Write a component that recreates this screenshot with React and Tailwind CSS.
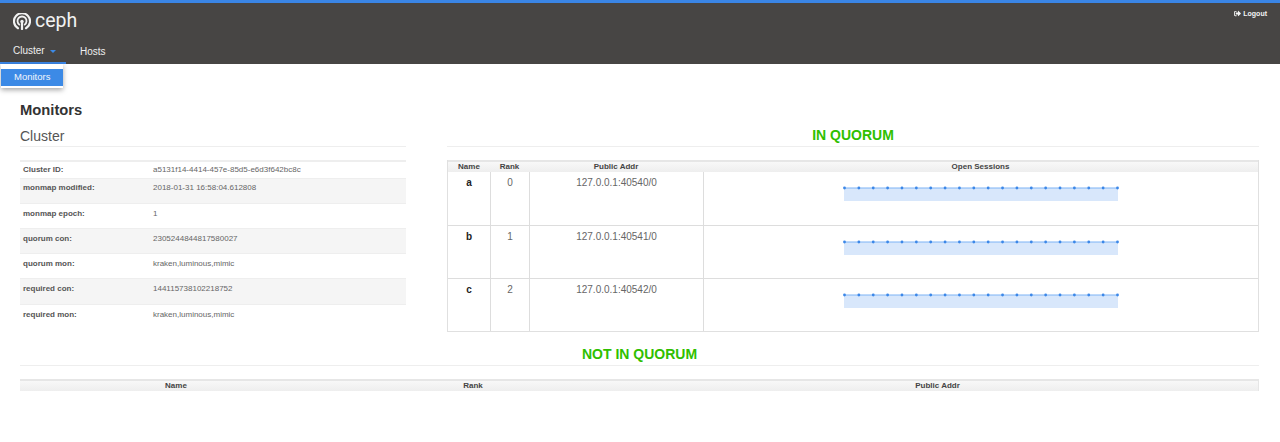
import { FaSignOutAlt } from 'react-icons/fa';

const clusterRows = [
    ['Cluster ID:', 'a5131f14-4414-457e-85d5-e6d3f642bc8c', 'h-[17px] pt-[3px]', ''],
    ['monmap modified:', '2018-01-31 16:58:04.612808', 'h-[25px] pt-[4px]', 'bg-[#f5f5f5]'],
    ['monmap epoch:', '1', 'h-[25px] pt-[5px]', ''],
    ['quorum con:', '2305244844817580027', 'h-[25px] pt-[5px]', 'bg-[#f5f5f5]'],
    ['quorum mon:', 'kraken,luminous,mimic', 'h-[25px] pt-[5px]', ''],
    ['required con:', '144115738102218752', 'h-[26px] pt-[5px]', 'bg-[#f5f5f5]'],
    ['required mon:', 'kraken,luminous,mimic', 'h-[25px] pt-[5px]', ''],
];

const monitors = [
    ['a', '0', '127.0.0.1:40540/0'],
    ['b', '1', '127.0.0.1:40541/0'],
    ['c', '2', '127.0.0.1:40542/0'],
];

// 20 samples of a flat sparkline
const Sparkline = () => (
    <svg width="276" height="16" viewBox="0 0 276 16" className="block">
        <rect x="1" y="3" width="274" height="13" fill="#d8e7fb" />
        <line x1="1" y1="3" x2="275" y2="3" stroke="#7db3f5" strokeWidth="1" />
        {Array.from({ length: 20 }, (_, i) => (
            <circle key={i} cx={1.5 + i * (273 / 19)} cy="3" r="1.4" fill="#3b87e8" />
        ))}
    </svg>
);

const CephLogo = () => (
    <svg width="18" height="17" viewBox="0 0 18 17" fill="none" stroke="#f2f2f2" strokeLinecap="round" className="block">
        <path d="M5 15.2 A8 8 0 1 1 13 15.2" strokeWidth="2.2" />
        <path d="M6.3 11.6 A4.5 4.5 0 1 1 11.7 11.6" strokeWidth="1.8" />
        <circle cx="9" cy="8.4" r="1.7" fill="#f2f2f2" stroke="none" />
        <path d="M9 9 L9 16" strokeWidth="2.2" />
    </svg>
);

const Heading = ({ children }) => (
    <h3 className="h-[20px] border-b border-[#eeeeee] text-center text-[14px] leading-[17px] font-bold text-[#2fbf00]">{children}</h3>
);

const App = () => {
    return (
        <div className="h-[442px] w-[1280px] overflow-hidden bg-white font-['Liberation_Sans',sans-serif] text-[#333]">
            <header className="h-[64px] border-t-[3px] border-[#3a85e6] bg-[#474544]">
                <div className="flex h-[34px] items-start justify-between">
                    <div className="flex items-start pt-[10px] pl-[13px]">
                        <CephLogo />
                        <span className="mt-[-1px] ml-[4px] font-['Roboto',sans-serif] text-[19.5px] leading-[18px] font-normal text-[#f2f2f2]">ceph</span>
                    </div>
                    <a className="flex items-center gap-[2px] pt-[6px] pr-[13px] text-[7px] leading-[9px] font-bold text-[#f4f4f4]">
                        <FaSignOutAlt className="text-[7px]" />
                        Logout
                    </a>
                </div>
                <nav className="relative flex h-[27px] text-[10px] text-[#eeeeee]">
                    <div className="flex h-[27px] w-[66px] items-center border-b-[2px] border-[#3a85e6] pt-[1px] pl-[13px]">
                        Cluster
                        <span className="mt-[2px] ml-[5px] h-0 w-0 border-x-[3px] border-t-[3px] border-x-transparent border-t-[#3c8ae6]"></span>
                    </div>
                    <div className="ml-[14px] flex items-center pt-[1px]">Hosts</div>
                    <div className="absolute top-[27px] left-[1px] h-[24px] w-[62px] bg-white pt-[5px] shadow-[0_2px_5px_rgba(0,0,0,0.35)]">
                        <div className="flex h-[17px] items-center bg-[#3c8ae6] pl-[13px] text-[9.5px] text-[#f2f6fc]">Monitors</div>
                    </div>
                </nav>
            </header>

            <main className="pt-[36px] pr-[21px] pl-[20px]">
                <h2 className="h-[27px] text-[14.75px] leading-[20px] font-bold text-[#333]">Monitors</h2>
                <div className="flex justify-between">
                    <section className="w-[386px]">
                        <h3 className="h-[20px] border-b border-[#eeeeee] pt-[1px] text-[14px] leading-[17px] font-normal text-[#555]">Cluster</h3>
                        <div className="mt-[13px] border-t-[2px] border-[#eeeeee] text-[8px] leading-[10px] text-[#666]">
                            {clusterRows.map(([label, value, box, bg], i) => (
                                <div key={label} className={`flex ${box} ${bg} ${i < clusterRows.length - 1 ? 'border-b border-[#eeeeee]' : ''}`}>
                                    <div className="w-[133px] pl-[3px] font-bold text-[#555]">{label}</div>
                                    <div>{value}</div>
                                </div>
                            ))}
                        </div>
                    </section>

                    <section className="w-[812px]">
                        <Heading>IN QUORUM</Heading>
                        <div className="mt-[13px] border-x border-b border-[#e0e0e0]">
                            <div className="flex h-[12px] items-center border-t-[2px] border-[#e6e6e6] bg-gradient-to-b from-[#f8f8f8] to-[#eeeeee] pb-[1px] text-center text-[8px] leading-[10px] font-bold text-[#444]">
                                <div className="w-[42px]">Name</div>
                                <div className="w-[39px]">Rank</div>
                                <div className="w-[174px]">Public Addr</div>
                                <div className="flex-1">Open Sessions</div>
                            </div>
                            {monitors.map(([name, rank, addr], i) => (
                                <div key={name} className={`flex h-[53px] text-center text-[10px] leading-[12px] text-[#666] ${i > 0 ? 'border-t border-[#dddddd]' : ''}`}>
                                    <div className="w-[42px] pt-[5px] font-bold text-[#222]">{name}</div>
                                    <div className="w-[39px] border-l border-[#dddddd] pt-[5px]">{rank}</div>
                                    <div className="w-[174px] border-l border-[#dddddd] pt-[5px]">{addr}</div>
                                    <div className="flex flex-1 justify-center border-l border-[#dddddd] pt-[13px]">
                                        <Sparkline />
                                    </div>
                                </div>
                            ))}
                        </div>
                    </section>
                </div>

                <div className="mt-[14px]">
                    <Heading>NOT IN QUORUM</Heading>
                    <div className="mt-[13px] flex h-[12px] items-center border-t-[2px] border-r border-[#e6e6e6] bg-gradient-to-b from-[#f8f8f8] to-[#eeeeee] pb-[1px] text-center text-[8px] leading-[10px] font-bold text-[#444]">
                        <div className="w-[312px]">Name</div>
                        <div className="w-[282px]">Rank</div>
                        <div className="flex-1 pl-[3px]">Public Addr</div>
                    </div>
                </div>
            </main>
        </div>
    );
};

export default App;
